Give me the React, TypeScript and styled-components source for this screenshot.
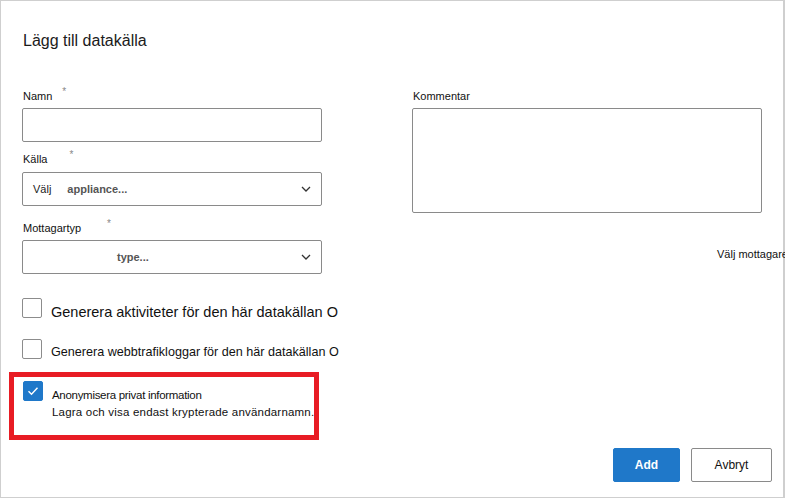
import styled, { createGlobalStyle } from 'styled-components';

const GlobalStyle = createGlobalStyle`
  html, body {
    margin: 0;
    padding: 0;
    background: #ffffff;
  }
  body {
    font-family: "Liberation Sans", Arial, sans-serif;
    color: #1b1b1b;
  }
`;

const Frame = styled.div`
  box-sizing: border-box;
  width: 785px;
  height: 498px;
  border: 1px solid #cfcfcf;
  border-right-width: 2px;
  padding: 30px 11px 0 21px;
  display: flex;
  flex-direction: column;
`;

const Title = styled.h1`
  margin: 0 0 0 1px;
  font-size: 16px;
  font-weight: normal;
  line-height: 20px;
  color: #1b1b1b;
`;

const Columns = styled.div`
  display: grid;
  grid-template-columns: 300px 350px;
  column-gap: 90px;
  margin-top: 37px;
`;

const Column = styled.div`
  display: flex;
  flex-direction: column;
`;

const Label = styled.label<{ $top?: number }>`
  display: block;
  font-size: 11px;
  line-height: 16px;
  margin-top: ${p => p.$top ?? 0}px;
  margin-left: 1px;
  color: #111;
`;

const Required = styled.span<{ $gap: number }>`
  display: inline-block;
  margin-left: ${p => p.$gap}px;
  font-size: 10px;
  color: #888;
  vertical-align: top;
  transform: translateY(-4px);
`;

const TextBox = styled.div<{ $top?: number; $height?: number }>`
  box-sizing: border-box;
  height: ${p => p.$height ?? 34}px;
  margin-top: ${p => p.$top ?? 4}px;
  border: 1px solid #8a8a8a;
  border-radius: 2px;
  background: #fff;
`;

const SelectBox = styled.div<{ $top?: number }>`
  box-sizing: border-box;
  height: 34px;
  margin-top: ${p => p.$top ?? 4}px;
  border: 1px solid #8a8a8a;
  border-radius: 2px;
  background: #fff;
  display: flex;
  align-items: center;
  padding: 0 10px 0 10px;
  font-size: 11px;
`;

const Plain = styled.span`
  color: #222;
  margin-right: 16px;
`;

const Placeholder = styled.span<{ $indent?: number }>`
  color: #555;
  font-weight: bold;
  margin-left: ${p => p.$indent ?? 0}px;
`;

const Chevron = styled.svg`
  margin-left: auto;
  width: 10px;
  height: 6px;
`;

const SideLink = styled.div`
  margin-top: 33px;
  margin-left: 305px;
  white-space: nowrap;
  font-size: 11px;
  line-height: 16px;
  color: #111;
`;

const CheckRow = styled.div<{ $top: number }>`
  display: flex;
  align-items: flex-start;
  column-gap: 9px;
  height: 20px;
  margin-top: ${p => p.$top}px;
`;

const Box = styled.span<{ $checked?: boolean }>`
  box-sizing: border-box;
  flex: none;
  width: 20px;
  height: 20px;
  border-radius: 2px;
  border: 1px solid ${p => (p.$checked ? '#1f78c9' : '#8c8c8c')};
  background: ${p => (p.$checked ? '#1f78c9' : '#fff')};
  display: flex;
  align-items: center;
  justify-content: center;
`;

const CheckText = styled.span<{ $size: number; $down: number }>`
  font-size: ${p => p.$size}px;
  line-height: 18px;
  margin-top: ${p => p.$down}px;
  color: #111;
  white-space: nowrap;
`;

const Highlight = styled.div`
  box-sizing: border-box;
  width: 310px;
  height: 68px;
  margin-top: 13px;
  margin-left: -13px;
  border: 5px solid #e81c24;
  padding: 4px 0 0 9px;
`;

const TextStack = styled.div`
  display: flex;
  flex-direction: column;
  margin-top: 6px;
  font-size: 11.5px;
  line-height: 17px;
  color: #111;
  white-space: nowrap;
`;

const StackLine = styled.span<{ $spacing: number }>`
  letter-spacing: ${p => p.$spacing}px;
`;

const Footer = styled.div`
  display: flex;
  justify-content: flex-end;
  column-gap: 11px;
  margin-top: 8px;
`;

const Button = styled.button<{ $primary?: boolean }>`
  box-sizing: border-box;
  height: 34px;
  width: ${p => (p.$primary ? 67 : 81)}px;
  border-radius: 2px;
  border: 1px solid ${p => (p.$primary ? '#1f78c9' : '#8a8a8a')};
  background: ${p => (p.$primary ? '#1f78c9' : '#fff')};
  color: ${p => (p.$primary ? '#fff' : '#111')};
  font-family: "Liberation Sans", Arial, sans-serif;
  font-size: 12px;
  font-weight: ${p => (p.$primary ? 'bold' : 'normal')};
  padding: 0;
`;

function ChevronDown() {
  return (
    <Chevron viewBox="0 0 10 6">
      <path d="M1 1l4 4 4-4" fill="none" stroke="#333" strokeWidth="1.3" />
    </Chevron>
  );
}

function Tick() {
  return (
    <svg width="12" height="10" viewBox="0 0 12 10">
      <path d="M1.5 5.2l3 3 6-6.5" fill="none" stroke="#fff" strokeWidth="1.4" />
    </svg>
  );
}

export default function App() {
  return (
    <>
      <GlobalStyle />
      <Frame>
        <Title>Lägg till datakälla</Title>
        <Columns>
          <Column>
            <Label>
              Namn<Required $gap={10}>*</Required>
            </Label>
            <TextBox $top={4} />
            <Label $top={9}>
              Källa<Required $gap={22}>*</Required>
            </Label>
            <SelectBox $top={5}>
              <Plain>Välj</Plain>
              <Placeholder>appliance...</Placeholder>
              <ChevronDown />
            </SelectBox>
            <Label $top={14}>
              Mottagartyp<Required $gap={26}>*</Required>
            </Label>
            <SelectBox $top={4}>
              <Placeholder $indent={84}>type...</Placeholder>
              <ChevronDown />
            </SelectBox>
          </Column>
          <Column>
            <Label>Kommentar</Label>
            <TextBox $top={4} $height={105} />
            <SideLink>Välj mottagare</SideLink>
          </Column>
        </Columns>

        <CheckRow $top={24}>
          <Box />
          <CheckText $size={14.5} $down={5}>Generera aktiviteter för den här datakällan O</CheckText>
        </CheckRow>
        <CheckRow $top={21}>
          <Box />
          <CheckText $size={12.6} $down={4}>Generera webbtrafikloggar för den här datakällan O</CheckText>
        </CheckRow>

        <Highlight>
          <CheckRow $top={0}>
            <Box $checked>
              <Tick />
            </Box>
            <TextStack>
              <StackLine $spacing={-0.3}>Anonymisera privat information</StackLine>
              <StackLine $spacing={0.2}>Lagra och visa endast krypterade användarnamn.</StackLine>
            </TextStack>
          </CheckRow>
        </Highlight>

        <Footer>
          <Button $primary>Add</Button>
          <Button>Avbryt</Button>
        </Footer>
      </Frame>
    </>
  );
}
